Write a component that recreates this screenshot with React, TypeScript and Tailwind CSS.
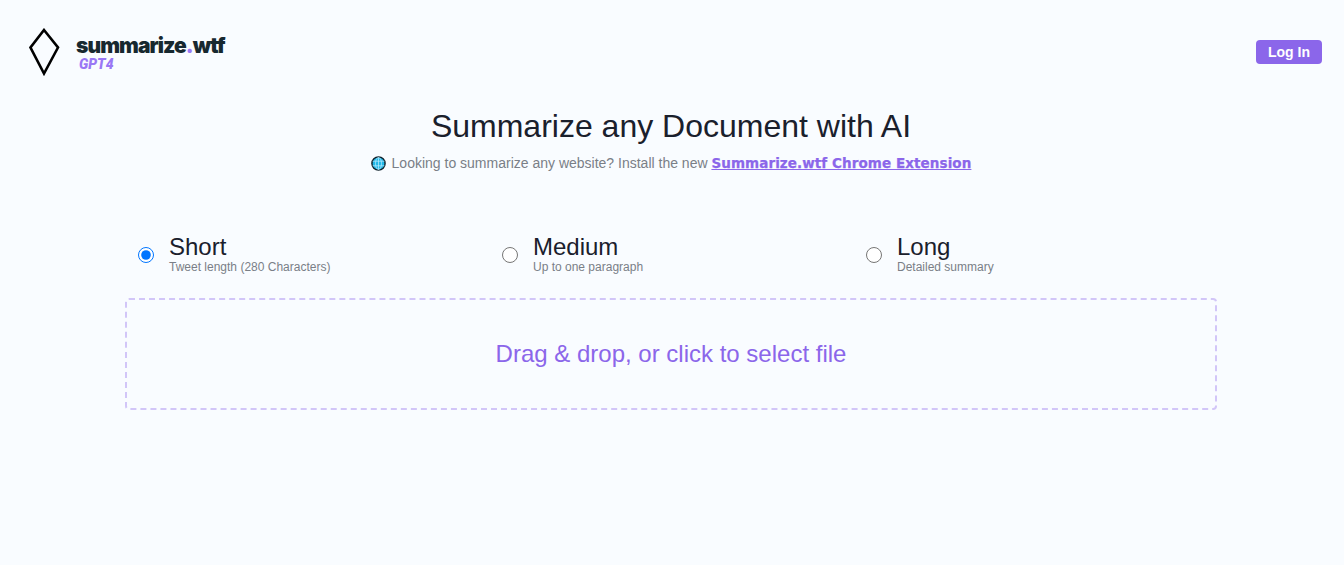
const sans = "font-['Liberation_Sans',Arial,sans-serif]";

function Diamond() {
  return (
    <svg width="31" height="48" viewBox="0 0 31 48" className="shrink-0">
      <path d="M15 2 L29 19.5 L15 45.5 L1.5 19.5 Z" fill="none" stroke="#000" strokeWidth="2.6" strokeLinejoin="miter" />
    </svg>
  );
}

function Globe() {
  return (
    <svg width="15" height="15" viewBox="0 0 15 15" className="shrink-0">
      <circle cx="7.5" cy="7.5" r="6.6" fill="#22b8e8" stroke="#10222c" strokeWidth="1.4" />
      <ellipse cx="7.5" cy="7.5" rx="3" ry="6" fill="none" stroke="#bfeeff" strokeWidth="0.7" />
      <path d="M1.5 5.2H13.5M1.5 9.8H13.5M7.5 1.5V13.5" stroke="#bfeeff" strokeWidth="0.7" />
    </svg>
  );
}

function Option({ title, sub, checked }: { title: string; sub: string; checked?: boolean }) {
  return (
    <label className="flex items-center pl-[13px]">
      <input type="radio" name="len" defaultChecked={checked} className="w-4 h-4 m-0 mt-[3px] accent-[#0075ff] appearance-auto" />
      <span className="ml-[15px] flex flex-col">
        <span className="text-[24px] leading-[28px] text-[#1a202c]">{title}</span>
        <span className="text-[12px] leading-[12px] text-[#7a7f87]">{sub}</span>
      </span>
    </label>
  );
}

export default function App() {
  return (
    <div className={`${sans} min-h-[565px] bg-[#f9fcff] flex flex-col`}>
      <header className="h-[106px] flex items-start justify-between pl-[29px] pr-[22px] pt-[28px]">
        <div className="flex items-start">
          <Diamond />
          <div className="ml-[16px] mt-[6px] flex flex-col">
            <span className="font-['Inter',sans-serif] font-black text-[21px] leading-[23px] tracking-[-0.92px] text-[#17282f]">
              summarize<span className="text-[#9a77f5]">.</span>wtf
            </span>
            <span className="ml-[3px] font-['Roboto',sans-serif] font-black italic text-[14px] leading-[14px] text-[#9a77f5]">GPT4</span>
          </div>
        </div>
        <button className="mt-[12px] w-[66px] h-[24px] rounded-[4px] bg-[#8b66ea] text-white text-[14px] font-bold flex items-center justify-center">
          Log In
        </button>
      </header>

      <main className="w-[1342px] flex flex-col items-center">
        <h1 className="text-[32px] leading-[40px] text-[#1a202c]">Summarize any Document with AI</h1>
        <p className="mt-[7px] flex items-center text-[14px] leading-[20px] text-[#7a7f87]">
          <Globe />
          <span className="ml-[6px]">Looking to summarize any website? Install the new&nbsp;</span>
          <a href="#" className="font-['DejaVu_Sans',sans-serif] font-bold text-[13.5px] tracking-[0.08px] underline text-[#8b66ea] [-webkit-text-stroke:0.25px_#8b66ea]">
            Summarize.wtf Chrome Extension
          </a>
        </p>
        <div className="mt-[60px] w-[1092px] grid grid-cols-3">
          <Option title="Short" sub="Tweet length (280 Characters)" checked />
          <Option title="Medium" sub="Up to one paragraph" />
          <Option title="Long" sub="Detailed summary" />
        </div>
        <div className="mt-[25px] w-[1092px] h-[112px] rounded-[4px] border-2 border-dashed border-[#d2c6f8] flex items-center justify-center text-[24px] text-[#8b66ea]">
          Drag &amp; drop, or click to select file
        </div>
      </main>
    </div>
  );
}
